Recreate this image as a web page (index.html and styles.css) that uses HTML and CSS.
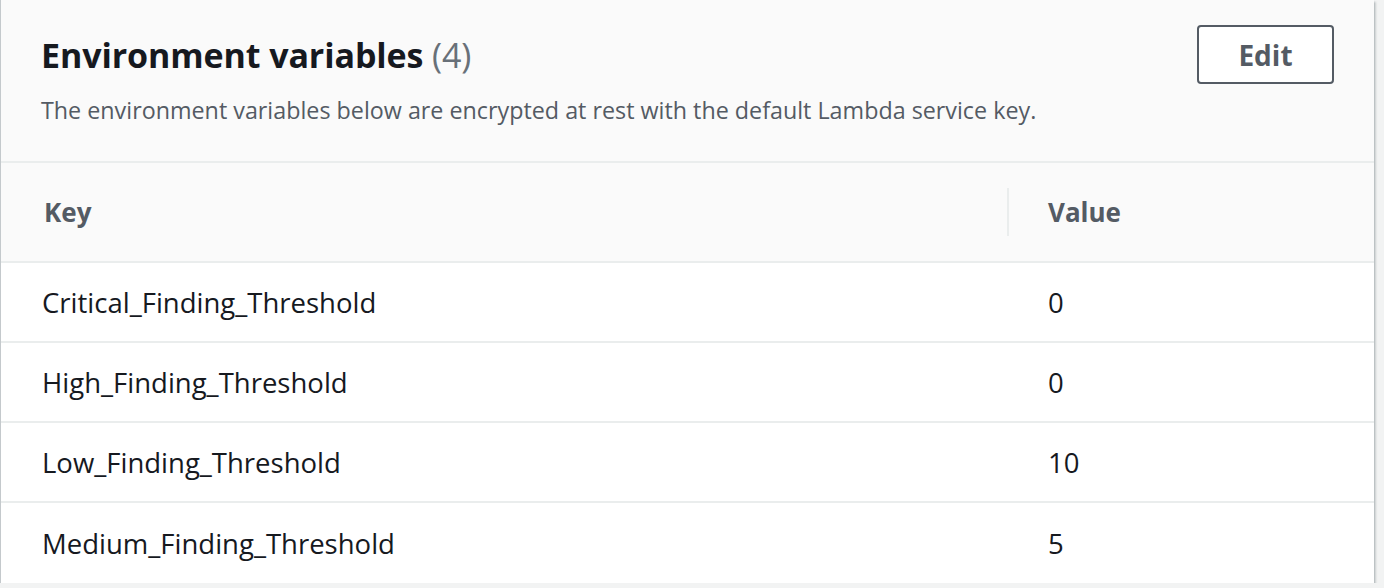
FILE: index.html
```
<!DOCTYPE html>
<html lang="en">
<head>
<meta charset="utf-8">
<title>Environment variables</title>
<link rel="stylesheet" href="styles.css">
</head>
<body>
<div class="card">
  <div class="card-header">
    <div class="header-text">
      <h2 class="title">Environment variables <span class="count">(4)</span></h2>
      <p class="desc">The environment variables below are encrypted at rest with the default Lambda service key.</p>
    </div>
    <button class="btn">Edit</button>
  </div>
  <table class="table">
    <thead>
      <tr>
        <th class="col-key">Key</th>
        <th class="col-value">Value</th>
      </tr>
    </thead>
    <tbody>
      <tr><td>Critical_Finding_Threshold</td><td class="val">0</td></tr>
      <tr><td>High_Finding_Threshold</td><td class="val">0</td></tr>
      <tr><td>Low_Finding_Threshold</td><td class="val">10</td></tr>
      <tr><td>Medium_Finding_Threshold</td><td class="val">5</td></tr>
    </tbody>
  </table>
</div>
</body>
</html>
```
FILE: styles.css
```
html, body {
  margin: 0;
  padding: 0;
  background: #f2f3f3;
  font-family: "Open Sans", "Noto Sans", sans-serif;
  color: #16191f;
}

.card {
  width: 1374px;
  background: #ffffff;
  box-shadow: 0 2px 2px 0 rgba(0, 28, 36, 0.3), 2px 2px 2px 0 rgba(0, 28, 36, 0.15), -2px 2px 2px 0 rgba(0, 28, 36, 0.15);
  border-left: 1px solid #c4c9cc;
  box-sizing: border-box;
}

.card-header {
  background: #fafafa;
  display: flex;
  justify-content: space-between;
  align-items: flex-start;
  padding: 24px 40px 0 40px;
  height: 163px;
  box-sizing: border-box;
  border-bottom: 2px solid #eaeded;
}

.title {
  margin: 0;
  font-size: 34px;
  line-height: 62px;
  font-weight: 700;
  color: #16191f;
  letter-spacing: -0.1px;
}

.count {
  font-weight: 400;
  color: #687078;
}

.desc {
  margin: 0;
  font-size: 23.3px;
  line-height: 48px;
  color: #545b64;
}

.btn {
  margin-top: 1px;
  width: 137px;
  height: 59px;
  background: #ffffff;
  border: 2px solid #545b64;
  border-radius: 4px;
  font-family: inherit;
  font-size: 28px;
  font-weight: 700;
  color: #545b64;
  padding: 0;
}

.table {
  width: 100%;
  border-collapse: collapse;
}

.table th {
  background: #fafafa;
  height: 99px;
  text-align: left;
  font-size: 26px;
  font-weight: 700;
  color: #545b64;
  border-bottom: 2px solid #eaeded;
  padding: 0;
  box-sizing: border-box;
}

.col-key {
  width: 1006px;
  padding-left: 43px !important;
}

.col-value {
  position: relative;
  padding-left: 41px !important;
}

.col-value::before {
  content: "";
  position: absolute;
  left: 0;
  top: 25px;
  width: 2px;
  height: 48px;
  background: #eaeded;
}

.table td {
  height: 78px;
  font-size: 27.5px;
  color: #16191f;
  border-bottom: 2px solid #eaeded;
  padding: 0 0 0 41px;
}

.table td.val {
  padding-left: 41px;
}

.table tbody tr:last-child td {
  border-bottom: none;
  height: 80px;
}
```
